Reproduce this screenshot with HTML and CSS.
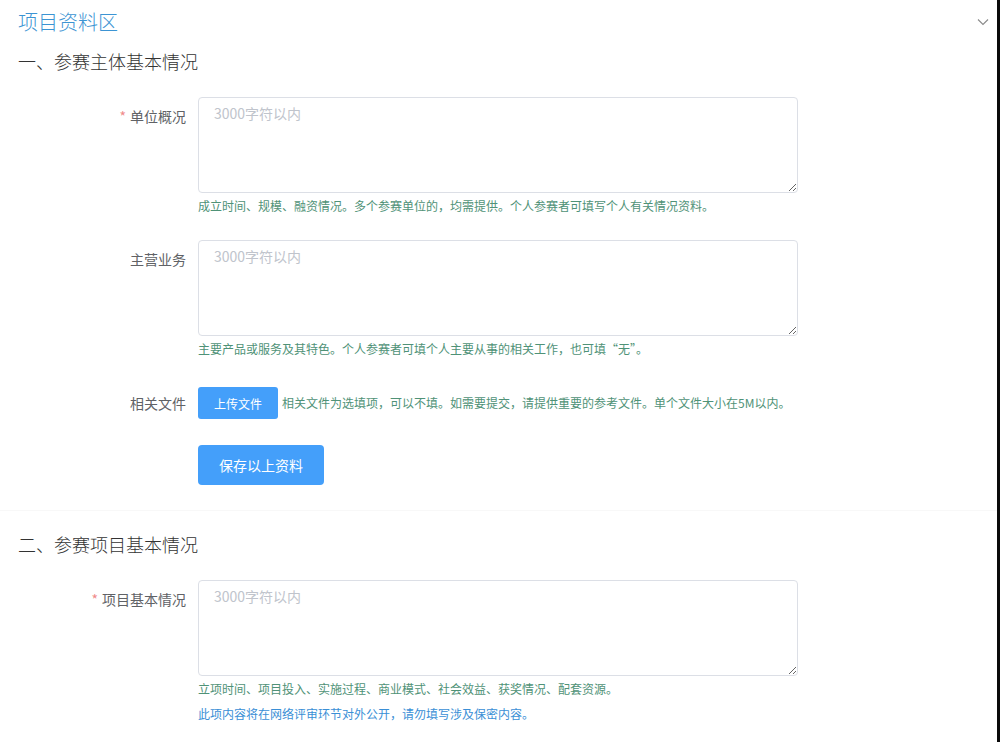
FILE: index.html
```html
<!DOCTYPE html>
<html lang="zh-CN">
<head>
<meta charset="utf-8">
<title>项目资料区</title>
<link rel="stylesheet" href="styles.css">
</head>
<body>
<div class="page">
  <div class="header">
    <h1 class="title">项目资料区</h1>
    <svg class="chevron" width="12" height="8" viewBox="0 0 12 8"><path d="M1 1.5 L6 6.5 L11 1.5" fill="none" stroke="#8a8a8a" stroke-width="1.1"/></svg>
  </div>

  <div class="section first">
    <h2 class="section-title">一、参赛主体基本情况</h2>

    <div class="form-item">
      <label class="label"><span class="req">*</span>单位概况</label>
      <div class="content">
        <textarea class="textarea" placeholder="3000字符以内"></textarea>
        <div class="hint">成立时间、规模、融资情况。多个参赛单位的，均需提供。个人参赛者可填写个人有关情况资料。</div>
      </div>
    </div>

    <div class="form-item">
      <label class="label">主营业务</label>
      <div class="content">
        <textarea class="textarea" placeholder="3000字符以内"></textarea>
        <div class="hint">主要产品或服务及其特色。个人参赛者可填个人主要从事的相关工作，也可填“无”。</div>
      </div>
    </div>

    <div class="form-item upload-item">
      <label class="label">相关文件</label>
      <div class="content inline">
        <button class="btn btn-small">上传文件</button>
        <span class="hint inline-hint">相关文件为选填项，可以不填。如需要提交，请提供重要的参考文件。单个文件大小在5M以内。</span>
      </div>
    </div>

    <div class="form-item save-item">
      <div class="label"></div>
      <div class="content">
        <button class="btn btn-large">保存以上资料</button>
      </div>
    </div>
  </div>

  <div class="section">
    <h2 class="section-title">二、参赛项目基本情况</h2>

    <div class="form-item">
      <label class="label"><span class="req">*</span>项目基本情况</label>
      <div class="content">
        <textarea class="textarea" placeholder="3000字符以内"></textarea>
        <div class="hint">立项时间、项目投入、实施过程、商业模式、社会效益、获奖情况、配套资源。</div>
        <div class="hint blue">此项内容将在网络评审环节对外公开，请勿填写涉及保密内容。</div>
      </div>
    </div>
  </div>
</div>
</body>
</html>
```

FILE: styles.css
```css
* { box-sizing: border-box; }
html, body { margin: 0; padding: 0; background: #fff; }
body {
  font-family: "Microsoft YaHei", "Noto Sans CJK SC", "Noto Sans", sans-serif;
  color: #606266;
  overflow: hidden;
}
.page {
  position: relative;
  height: 742px;
  border-right: 3px solid #0a0a0a;
  padding: 8px 0 0 0;
}
.header {
  position: relative;
  padding: 0 18px;
}
.title {
  margin: 0;
  font-size: 20px;
  line-height: 28px;
  font-weight: 300;
  color: #3c94d3;
}
.chevron {
  position: absolute;
  right: 8px;
  top: 10px;
}
.section {
  padding: 0 18px;
}
.section.first {
  padding-bottom: 25px;
  border-bottom: 1px solid #f8f8f8;
}
.section-title {
  margin: 12px 0 23px;
  font-size: 18px;
  line-height: 26px;
  font-weight: 300;
  color: #333;
}
.section:not(.first) .section-title {
  margin-top: 20px;
  margin-bottom: 23px;
}
.form-item {
  display: flex;
  margin-bottom: 24px;
}
.form-item.upload-item { margin-bottom: 22px; }
.form-item.save-item { margin-bottom: 0; }
.label {
  flex: 0 0 180px;
  text-align: right;
  padding-right: 12px;
  font-size: 14px;
  line-height: 38px;
  color: #606266;
}
.upload-item .label { line-height: 40px; }
.req {
  color: #f08a8a;
  margin-right: 4px;
}
.content {
  flex: 0 0 600px;
}
.content.inline {
  display: flex;
  align-items: center;
  height: 40px;
  flex: 1 1 auto;
}
.textarea {
  display: block;
  width: 600px;
  height: 96px;
  padding: 5px 15px;
  border: 1px solid #dcdfe6;
  border-radius: 4px;
  font-family: inherit;
  font-size: 14px;
  line-height: 21px;
  color: #606266;
  resize: vertical;
  outline: none;
}
.textarea::placeholder { color: #c0c4cc; }
.hint {
  margin-top: 3px;
  font-size: 12px;
  line-height: 20px;
  color: #4f9277;
  white-space: nowrap;
}
.hint.blue {
  margin-top: 5px;
  color: #3a8fd6;
}
.inline-hint {
  margin: 0 0 0 4px;
}
.btn {
  border: none;
  background: #449ffa;
  color: #fff;
  font-family: inherit;
  cursor: pointer;
  padding: 0;
}
.btn-small {
  width: 80px;
  height: 32px;
  border-radius: 3px;
  font-size: 12px;
}
.btn-large {
  width: 126px;
  height: 40px;
  border-radius: 4px;
  font-size: 14px;
}
```
